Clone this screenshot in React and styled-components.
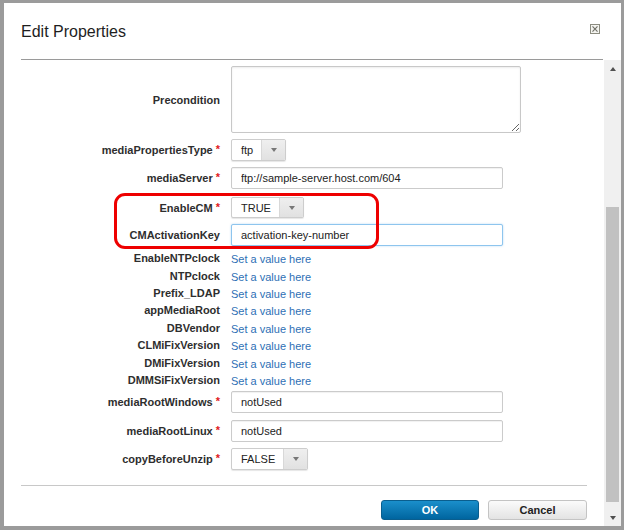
import React from "react";
import styled, { createGlobalStyle } from "styled-components";

const Global = createGlobalStyle`
  html, body { margin: 0; padding: 0; background: #fff; overflow: hidden; }
  body { font-family: "Liberation Sans", Arial, sans-serif; }
  * { box-sizing: border-box; }
`;

const Dialog = styled.div`
  width: 624px;
  height: 530px;
  border-style: solid;
  border-color: #9b9b9b;
  border-width: 3px 3px 4px 4px;
  background: #fff;
  display: flex;
  flex-direction: column;
  font-family: "Liberation Sans", Arial, sans-serif;
`;

const Header = styled.div`
  height: 57px;
  margin: 0 18px 0 17px;
  padding-top: 20px;
  border-bottom: 1px solid #9a9a9a;
  display: flex;
  justify-content: space-between;
  align-items: flex-start;
  flex-shrink: 0;
`;

const Title = styled.h1`
  margin: 0;
  font-size: 16px;
  font-weight: normal;
  color: #1e1e1e;
  line-height: 18px;
`;

const CloseBtn = styled.button`
  margin: 1px 3px 0 0;
  padding: 0;
  border: 0;
  background: none;
  width: 10px;
  height: 10px;
  display: flex;
  cursor: pointer;
`;

const Body = styled.div`
  flex: 1;
  display: flex;
  min-height: 0;
`;

const Main = styled.div`
  flex: 1;
  display: flex;
  flex-direction: column;
  min-width: 0;
`;

const Form = styled.div`
  height: 425px;
  display: flex;
  flex-direction: column;
  overflow: hidden;
`;

const Row = styled.div`
  display: grid;
  grid-template-columns: 216px 1fr;
  column-gap: 11px;
  align-items: center;
  margin-top: ${(p) => p.$mt || 0}px;
  height: ${(p) => p.$h}px;
  flex-shrink: 0;
`;

const Label = styled.label`
  text-align: right;
  font-size: 11px;
  font-weight: bold;
  color: #2e2e2e;
  white-space: nowrap;
`;

const Req = styled.span`
  color: #e0201c;
  font-weight: bold;
  margin-left: 3px;
  position: relative;
  top: -1px;
`;

const TextArea = styled.textarea`
  width: 290px;
  height: 67px;
  border: 1px solid #c8c8c8;
  border-radius: 2px;
  box-shadow: inset 0 1px 2px rgba(0, 0, 0, 0.08);
  font-family: inherit;
  font-size: 11px;
  padding: 4px 9px;
  display: block;
  outline: none;
`;

const TextInput = styled.input`
  width: 272px;
  height: 22px;
  border: 1px solid ${(p) => (p.$focused ? "#8ec5ee" : "#cbcbcb")};
  border-radius: 2px;
  box-shadow: ${(p) =>
    p.$focused ? "0 0 2px rgba(102,175,233,0.5)" : "inset 0 1px 1px rgba(0,0,0,0.06)"};
  font-family: "Liberation Sans", Arial, sans-serif;
  font-size: 11px;
  color: #222;
  padding: 0 9px;
  outline: none;
  display: block;
`;

const Select = styled.div`
  width: ${(p) => p.$w}px;
  height: ${(p) => p.$h || 22}px;
  display: flex;
  border: 1px solid #cdcdcd;
  border-radius: 2px;
  box-shadow: 0 1px 1px rgba(0, 0, 0, 0.1);
  background: #fff;
  overflow: hidden;
`;

const SelectValue = styled.span`
  flex: 1;
  padding-left: 9px;
  display: flex;
  align-items: center;
  font-size: 11px;
  color: #222;
`;

const SelectArrow = styled.span`
  width: 24px;
  border-left: 1px solid #d8d8d8;
  background: linear-gradient(#efefef, #e1e1e1);
  display: flex;
  align-items: center;
  justify-content: center;
  &::after {
    content: "";
    border-left: 3.5px solid transparent;
    border-right: 3.5px solid transparent;
    border-top: 4px solid #777;
  }
`;

const Link = styled.a`
  font-size: 11px;
  color: #2e6fb5;
  text-decoration: none;
  cursor: pointer;
  white-space: nowrap;
`;

const Highlight = styled.div`
  position: relative;
  margin-top: 8px;
  flex-shrink: 0;
`;

const RedBox = styled.div`
  position: absolute;
  left: 110px;
  top: -4px;
  width: 265px;
  height: 56px;
  border: 3px solid #ee0000;
  border-radius: 11px;
  pointer-events: none;
`;

const Footer = styled.div`
  flex: 1;
  margin: 0 17px;
  border-top: 1px solid #c8c8c8;
  padding-top: 14px;
  display: flex;
  justify-content: flex-end;
  gap: 9px;
`;

const Button = styled.button`
  width: ${(p) => p.$w}px;
  height: 20px;
  border-radius: 3px;
  font-family: "Liberation Sans", Arial, sans-serif;
  font-size: 11px;
  font-weight: bold;
  cursor: pointer;
  padding: 0;
  border: 1px solid ${(p) => (p.$primary ? "#0a5e8e" : "#c4c4c4")};
  color: ${(p) => (p.$primary ? "#fff" : "#222")};
  background: ${(p) =>
    p.$primary
      ? "linear-gradient(#1b8fcb, #00659f)"
      : "linear-gradient(#fbfbfb, #e3e3e3)"};
`;

const ScrollBar = styled.div`
  width: 17px;
  background: #f0f0f0;
  display: flex;
  flex-direction: column;
`;

const ScrollBtn = styled.div`
  height: 17px;
  display: flex;
  align-items: center;
  justify-content: center;
  &::after {
    content: "";
    border-left: 3.5px solid transparent;
    border-right: 3.5px solid transparent;
    ${(p) =>
      p.$down ? "border-top: 4px solid #505050;" : "border-bottom: 4px solid #505050;"}
  }
`;

const Track = styled.div`
  flex: 1;
  display: flex;
  flex-direction: column;
  padding: 130px 2px 7px 2px;
`;

const Thumb = styled.div`
  flex: 1;
  background: #c1c1c1;
`;

const CloseIcon = () => (
  <svg width="10" height="10" viewBox="0 0 10 10">
    <rect x="0.5" y="0.5" width="9" height="9" fill="#f4f4f0" stroke="#8c8c80" />
    <path d="M2.5 2.3 L7.5 7.7 M7.5 2.3 L2.5 7.7" stroke="#6f6f66" strokeWidth="1.1" />
  </svg>
);

const links = [
  "EnableNTPclock",
  "NTPclock",
  "Prefix_LDAP",
  "appMediaRoot",
  "DBVendor",
  "CLMiFixVersion",
  "DMiFixVersion",
  "DMMSiFixVersion",
];

const Lbl = ({ children, req }) => (
  <Label>
    {children}
    {req && <Req>*</Req>}
  </Label>
);

export default function App() {
  return (
    <>
      <Global />
      <Dialog>
        <Header>
          <Title>Edit Properties</Title>
          <CloseBtn aria-label="Close">
            <CloseIcon />
          </CloseBtn>
        </Header>
        <Body>
          <Main>
            <Form>
              <Row $mt={6} $h={67}>
                <Lbl>Precondition</Lbl>
                <div>
                  <TextArea />
                </div>
              </Row>
              <Row $mt={6} $h={22}>
                <Lbl req>mediaPropertiesType</Lbl>
                <Select $w={55}>
                  <SelectValue>ftp</SelectValue>
                  <SelectArrow />
                </Select>
              </Row>
              <Row $mt={6} $h={22}>
                <Lbl req>mediaServer</Lbl>
                <TextInput defaultValue="ftp://sample-server.host.com/604" />
              </Row>
              <Highlight>
                <Row $h={21}>
                  <Lbl req>EnableCM</Lbl>
                  <Select $w={73} $h={21}>
                    <SelectValue>TRUE</SelectValue>
                    <SelectArrow />
                  </Select>
                </Row>
                <Row $mt={6} $h={22}>
                  <Lbl>CMActivationKey</Lbl>
                  <TextInput $focused defaultValue="activation-key-number" />
                </Row>
                <RedBox />
              </Highlight>
              <div style={{ height: 3.3, flexShrink: 0 }} />
              {links.map((l) => (
                <Row key={l} $h={17.4}>
                  <Lbl>{l}</Lbl>
                  <div>
                    <Link>Set a value here</Link>
                  </div>
                </Row>
              ))}
              <Row $mt={2.5} $h={22}>
                <Lbl req>mediaRootWindows</Lbl>
                <TextInput defaultValue="notUsed" />
              </Row>
              <Row $mt={7} $h={22}>
                <Lbl req>mediaRootLinux</Lbl>
                <TextInput defaultValue="notUsed" />
              </Row>
              <Row $mt={6} $h={22}>
                <Lbl req>copyBeforeUnzip</Lbl>
                <Select $w={77}>
                  <SelectValue>FALSE</SelectValue>
                  <SelectArrow />
                </Select>
              </Row>
            </Form>
            <Footer>
              <Button $primary $w={98}>OK</Button>
              <Button $w={99}>Cancel</Button>
            </Footer>
          </Main>
          <ScrollBar>
            <ScrollBtn />
            <Track>
              <Thumb />
            </Track>
            <ScrollBtn $down />
          </ScrollBar>
        </Body>
      </Dialog>
    </>
  );
}
